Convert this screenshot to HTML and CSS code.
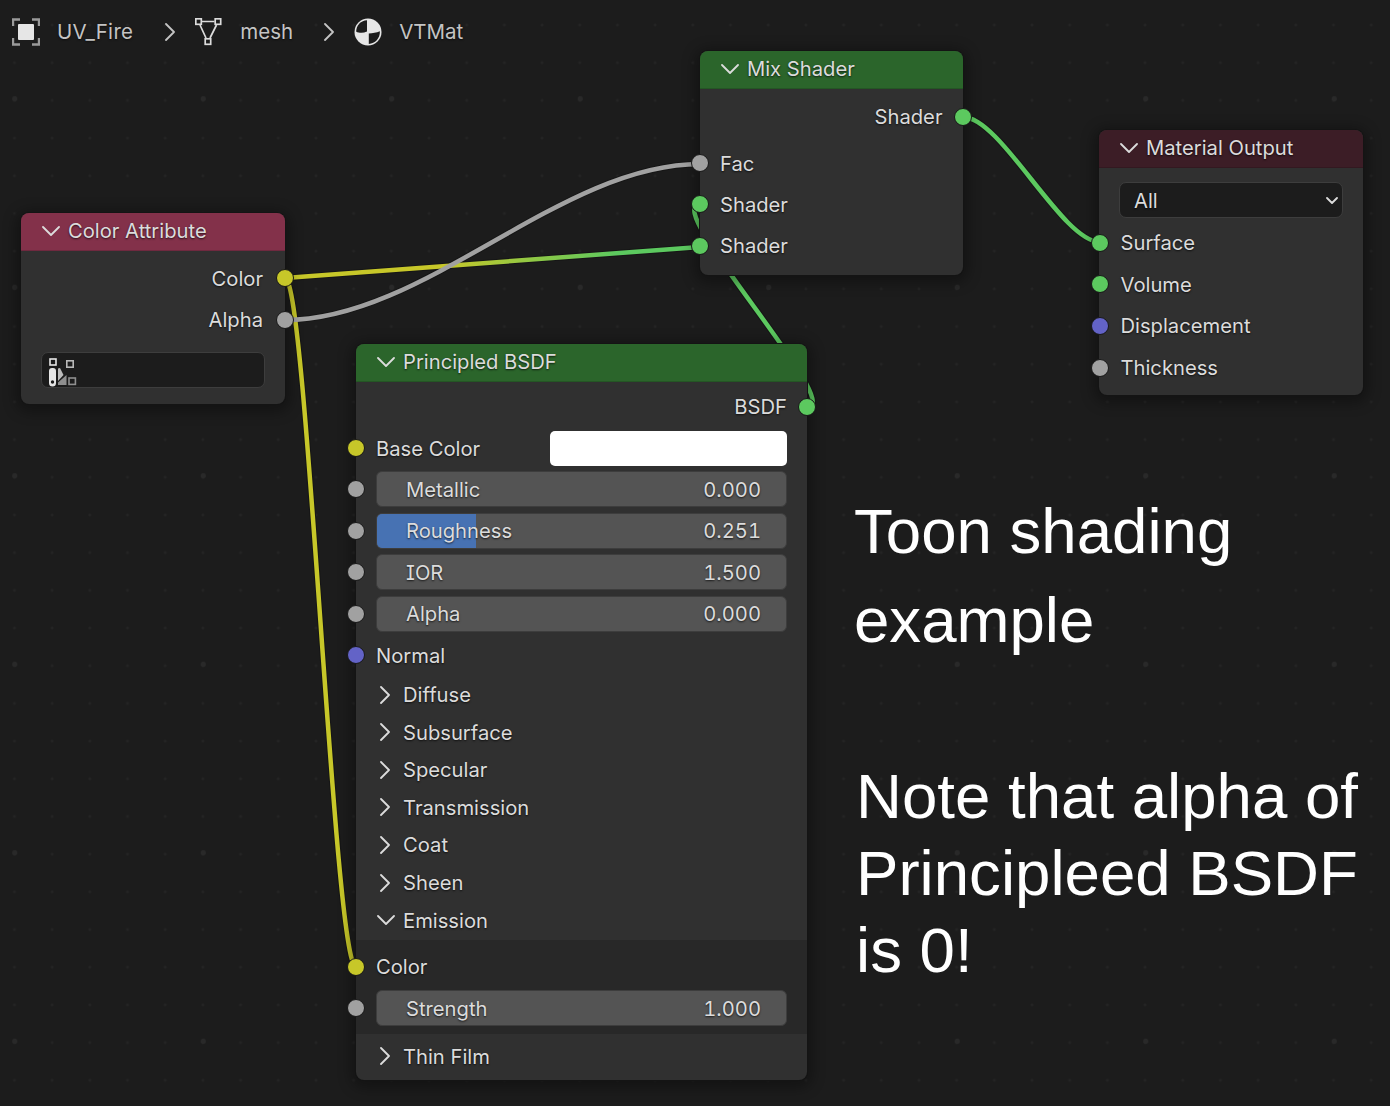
FILE: index.html
```html
<!DOCTYPE html>
<html lang="en">
<head>
    <meta charset="UTF-8">
    <title>VTMat node editor</title>
    <link rel="stylesheet" href="styles.css">
</head>
<body>
    <svg width="0" height="0" class="defs">
        <defs>
            <symbol id="chev-down" viewBox="0 0 18 10"><polyline points="1,1 9,9 17,1"/></symbol>
            <symbol id="chev-right" viewBox="0 0 10 18"><polyline points="1,1 9,9 1,17"/></symbol>
            <symbol id="chev-small" viewBox="0 0 12 7"><polyline points="1,1 6,6 11,1"/></symbol>
        </defs>
    </svg>

    <div class="canvas">
        <nav class="crumbs">
            <svg class="crumb-icon" width="28" height="28" viewBox="0 0 28 28">
                <path class="cage" d="M1 8V1.5H8M20 1.5H27V8M27 20V26.5H20M8 26.5H1V20"/>
                <rect x="6" y="6" width="16" height="16" rx="1" fill="#e6e6e6"/>
            </svg>
            <span class="crumb-label crumb-uv">UV_Fire</span>
            <svg class="crumb-sep" width="10" height="18"><use href="#chev-right"/></svg>
            <svg class="crumb-icon crumb-mesh" width="28" height="28" viewBox="0 0 28 28">
                <path class="wire" d="M7 3.500H19.500M5 7L11 20M21.500 7L15 20"/>
                <rect class="wire" x="0.800" y="0.800" width="5.500" height="5.500"/>
                <rect class="wire" x="20.200" y="0.800" width="5.500" height="5.500"/>
                <rect class="wire" x="10.200" y="20.800" width="5.500" height="5.500"/>
            </svg>
            <span class="crumb-label crumb-meshname">mesh</span>
            <svg class="crumb-sep" width="10" height="18"><use href="#chev-right"/></svg>
            <svg class="crumb-icon crumb-mat" width="28" height="28" viewBox="0 0 28 28">
                <circle cx="14" cy="14" r="13.5" fill="#e6e6e6"/>
                <path d="M13 2.2V13.6C9 15.4 5 15.2 2.1 13.4C2.4 7 7 2.6 13 2.2Z" fill="#1c1c1c"/>
                <path d="M14.8 15.4C18.5 15.4 22.5 14.6 25.9 13.2C26.2 20.4 21 25.6 14.8 25.9Z" fill="#1c1c1c"/>
            </svg>
            <span class="crumb-label crumb-matname">VTMat</span>
        </nav>

        <svg class="links" width="1390" height="1106" viewBox="0 0 1390 1106">
            <defs>
                <linearGradient id="yellow-green" gradientUnits="userSpaceOnUse" x1="285" y1="0" x2="700" y2="0">
                    <stop offset="0.38" stop-color="#c7c729"/>
                    <stop offset="0.8" stop-color="#5cc95f"/>
                </linearGradient>
            </defs>
            <g class="link-under">
                <path d="M285 278C307 278 334 967 356 967"/>
                <path d="M285 278L700 247"/>
                <path d="M285 320C425 320 560 164 700 164"/>
                <path d="M807 407C847 407 660 205 700 205"/>
                <path d="M963 117C1001 117 1062 242 1100 242"/>
            </g>
            <path class="link link-yellow" d="M285 278C307 278 334 967 356 967"/>
            <path class="link" stroke="url(#yellow-green)" d="M285 278L700 247"/>
            <path class="link link-green" d="M807 407C847 407 660 205 700 205"/>
            <path class="link link-grey" d="M285 320C425 320 560 164 700 164"/>
            <path class="link link-green" d="M963 117C1001 117 1062 242 1100 242"/>
        </svg>

        <section class="node node-attr">
            <header class="node-head head-attr">
                <svg class="chev-down" width="18" height="10"><use href="#chev-down"/></svg>Color Attribute
            </header>
            <div class="node-body attr-body">
                <div class="row row-out">Color<i class="socket out color"></i></div>
                <div class="row row-out">Alpha<i class="socket out value"></i></div>
                <div class="field">
                    <svg width="30" height="30" viewBox="0 0 30 30">
                        <rect x="2" y="2" width="6" height="6" fill="#1a1a1a" stroke="#e6e6e6" stroke-width="1.6"/>
                        <path d="M1 14a3 3 0 0 1 3-3h1a3 3 0 0 1 3 3v12a3.500 3.500 0 0 1-7 0Z" fill="#e6e6e6"/>
                        <circle cx="4.500" cy="25" r="1.700" fill="#1a1a1a"/>
                        <path d="M10 11.500L12 11L15.500 18L10 24Z" fill="#bcbcbc"/>
                        <path d="M10 28V25.500L18.500 18V28Z" fill="#8f8f8f"/>
                        <rect x="18.800" y="3.800" width="6.400" height="6.400" fill="none" stroke="#b8b8b8" stroke-width="1.600"/>
                        <rect x="21" y="21" width="6.400" height="6.400" fill="none" stroke="#8f8f8f" stroke-width="1.600"/>
                    </svg>
                </div>
            </div>
        </section>

        <section class="node node-mix">
            <header class="node-head head-shader">
                <svg class="chev-down" width="18" height="10"><use href="#chev-down"/></svg>Mix Shader
            </header>
            <div class="node-body mix-body">
                <div class="row row-out row-spaced">Shader<i class="socket out shader"></i></div>
                <div class="row"><i class="socket in value"></i>Fac</div>
                <div class="row"><i class="socket in shader"></i>Shader</div>
                <div class="row"><i class="socket in shader"></i>Shader</div>
            </div>
        </section>

        <section class="node node-output">
            <header class="node-head head-output">
                <svg class="chev-down" width="18" height="10"><use href="#chev-down"/></svg>Material Output
            </header>
            <div class="node-body output-body">
                <div class="select">All<svg class="select-arrow" width="12" height="7"><use href="#chev-small"/></svg></div>
                <div class="row"><i class="socket in shader"></i>Surface</div>
                <div class="row"><i class="socket in shader"></i>Volume</div>
                <div class="row"><i class="socket in vector"></i>Displacement</div>
                <div class="row"><i class="socket in value"></i>Thickness</div>
            </div>
        </section>

        <section class="node node-bsdf">
            <header class="node-head head-shader">
                <svg class="chev-down" width="18" height="10"><use href="#chev-down"/></svg>Principled BSDF
            </header>
            <div class="node-body bsdf-body">
                <div class="row row-out">BSDF<i class="socket out shader"></i></div>
                <div class="row row-color"><i class="socket in color"></i>Base Color<span class="swatch"></span></div>
                <div class="row"><i class="socket in value"></i><div class="slider"><span>Metallic</span><span>0.000</span></div></div>
                <div class="row"><i class="socket in value"></i><div class="slider"><b class="fill" style="width: 24.3%"></b><span>Roughness</span><span>0.251</span></div></div>
                <div class="row"><i class="socket in value"></i><div class="slider"><span>IOR</span><span>1.500</span></div></div>
                <div class="row"><i class="socket in value"></i><div class="slider"><span>Alpha</span><span>0.000</span></div></div>
                <div class="row"><i class="socket in vector"></i>Normal</div>

                <div class="panel-head"><svg class="chev-right" width="10" height="18"><use href="#chev-right"/></svg>Diffuse</div>
                <div class="panel-head"><svg class="chev-right" width="10" height="18"><use href="#chev-right"/></svg>Subsurface</div>
                <div class="panel-head"><svg class="chev-right" width="10" height="18"><use href="#chev-right"/></svg>Specular</div>
                <div class="panel-head"><svg class="chev-right" width="10" height="18"><use href="#chev-right"/></svg>Transmission</div>
                <div class="panel-head"><svg class="chev-right" width="10" height="18"><use href="#chev-right"/></svg>Coat</div>
                <div class="panel-head"><svg class="chev-right" width="10" height="18"><use href="#chev-right"/></svg>Sheen</div>
                <div class="panel-head"><svg class="chev-down" width="18" height="10"><use href="#chev-down"/></svg>Emission</div>
                <div class="panel-open">
                    <div class="row"><i class="socket in color"></i>Color</div>
                    <div class="row"><i class="socket in value"></i><div class="slider"><span>Strength</span><span>1.000</span></div></div>
                </div>
                <div class="panel-head panel-last"><svg class="chev-right" width="10" height="18"><use href="#chev-right"/></svg>Thin Film</div>
            </div>
        </section>

        <p class="note note-toon">Toon shading<br>example</p>
        <p class="note note-alpha">Note that alpha of<br>Principleed BSDF<br>is 0!</p>
    </div>
</body>
</html>
```

FILE: styles.css
```css
* {
    box-sizing: border-box;
}
html, body {
    margin: 0;
    height: 100%;
    overflow: hidden;
    background: #1c1c1c;
}
.defs {
    position: absolute;
}
symbol polyline {
    fill: none;
    stroke: currentColor;
    stroke-width: 1.8;
    stroke-linecap: round;
    stroke-linejoin: round;
}
.canvas {
    position: relative;
    width: 1390px;
    height: 1106px;
    overflow: hidden;
    font-family: Inter, "Liberation Sans", sans-serif;
    font-size: 20.2px;
    color: #dcdcdc;
    background-color: #1c1c1c;
    background-image:
        radial-gradient(circle, #292929 2.2px, transparent 3px),
        radial-gradient(circle, #242424 1.1px, transparent 1.8px);
    background-size: 188.5px 188.5px, 37.7px 37.7px;
    background-position: 297.500px 193px, -4.400px 6.200px;
}

/* breadcrumbs */
.crumbs {
    display: flex;
    align-items: center;
    height: 28px;
    margin: 18px 0 0 12px;
    color: #c4c4c4;
    font-size: 20.5px;
}
.crumb-label {
    margin-bottom: 2px;
    text-shadow: 0 1px 2px rgba(0, 0, 0, 0.6);
}
.crumb-uv {
    margin-left: 17px;
    margin-right: 32px;
    letter-spacing: 0.3px;
}
.crumb-mesh {
    margin-left: 20px;
}
.crumb-meshname {
    margin-left: 17px;
    margin-right: 31px;
}
.crumb-mat {
    margin-left: 20px;
}
.crumb-matname {
    margin-left: 17px;
}
.crumb-sep {
    color: #c4c4c4;
}
.cage {
    fill: none;
    stroke: #9a9a9a;
    stroke-width: 2.4;
}
.wire {
    fill: none;
    stroke: #dcdcdc;
    stroke-width: 1.7;
}

/* links between sockets */
.links {
    position: absolute;
    left: 0;
    top: 0;
}
.link-under path {
    fill: none;
    stroke: #161616;
    stroke-width: 6.500;
}
.link {
    fill: none;
    stroke-width: 4.500;
}
.link-yellow {
    stroke: #c7c729;
}
.link-green {
    stroke: #5cc95f;
}
.link-grey {
    stroke: #a1a1a1;
}

/* nodes */
.node {
    position: absolute;
    display: flex;
    flex-direction: column;
    background: #303030;
    border-radius: 8px;
    box-shadow: 0 0 0 1px #141414, 0 3px 14px 5px rgba(0, 0, 0, 0.32);
}
.node-attr {
    left: 21px;
    top: 213px;
    width: 264px;
    height: 191px;
}
.node-mix {
    left: 700px;
    top: 51px;
    width: 263px;
    height: 224px;
}
.node-output {
    left: 1099px;
    top: 130px;
    width: 264px;
    height: 265px;
}
.node-bsdf {
    left: 356px;
    top: 344px;
    width: 451px;
    height: 736px;
}
.node-head {
    display: flex;
    align-items: center;
    flex: none;
    height: 38px;
    padding: 0 0 2px 21px;
    border-radius: 8px 8px 0 0;
    border-bottom: 1px solid rgba(0, 0, 0, 0.15);
    text-shadow: 0 1px 2px rgba(0, 0, 0, 0.7);
}
.head-attr {
    background: #83314a;
}
.head-shader {
    background: #2b652b;
}
.head-output {
    background: #3c1d26;
}
.chev-down {
    flex: none;
    margin-right: 8px;
}
.node-body {
    display: flex;
    flex-direction: column;
}
.attr-body {
    padding-top: 6.500px;
}
.attr-body .row {
    padding-right: 22px;
}
.mix-body {
    padding-top: 7px;
}
.output-body {
    padding-top: 14px;
}
.output-body .row {
    height: 41.600px;
    padding-left: 21.500px;
}
.output-body .socket.in {
    left: -8px;
}
.bsdf-body {
    padding-top: 4px;
}
.row {
    position: relative;
    display: flex;
    align-items: center;
    flex: none;
    height: 41.400px;
    padding: 0 20.500px 0 20px;
    text-shadow: 0 1px 2px rgba(0, 0, 0, 0.7);
}
.row-out {
    justify-content: flex-end;
}
.row-spaced {
    margin-bottom: 5px;
}
.row-color {
    justify-content: space-between;
}
.bsdf-body .row {
    padding-right: 20px;
}

/* sockets sit on the node edge */
.socket {
    position: absolute;
    top: 50%;
    width: 18px;
    height: 18px;
    margin-top: -9px;
    border-radius: 50%;
    border: 1.500px solid #181818;
}
.socket.in {
    left: -9px;
}
.socket.out {
    right: -9px;
}
.shader {
    background: #5cc95f;
}
.color {
    background: #c7c729;
}
.value {
    background: #a1a1a1;
}
.vector {
    background: #6363c7;
}

/* widgets */
.swatch {
    width: 237px;
    height: 35px;
    background: #fff;
    border-radius: 5px;
}
.slider {
    position: relative;
    display: flex;
    justify-content: space-between;
    align-items: center;
    width: 100%;
    height: 36px;
    padding: 0 25px 0 29px;
    background: #545454;
    border: 1px solid #3d3d3d;
    border-radius: 6px;
    overflow: hidden;
    font-feature-settings: "tnum", "cv08";
}
.slider span {
    position: relative;
}
.fill {
    position: absolute;
    left: 0;
    top: 0;
    bottom: 0;
    background: #4772b3;
}
.field, .select {
    display: flex;
    align-items: center;
    background: #1c1c1c;
    border: 1.500px solid #3d3d3d;
    border-radius: 7px;
    height: 36px;
}
.field {
    margin: 12px 20px 0 20px;
    padding: 3px 0 0 6px;
}
.select {
    justify-content: space-between;
    margin: 0 20px 4px 20px;
    padding: 0 4px 0 14px;
    text-shadow: 0 1px 2px rgba(0, 0, 0, 0.7);
}
.select-arrow {
    color: #dcdcdc;
}

/* collapsible panels in the BSDF node */
.panel-head {
    display: flex;
    align-items: center;
    flex: none;
    height: 37.600px;
    padding-left: 21px;
    text-shadow: 0 1px 2px rgba(0, 0, 0, 0.7);
}
.chev-right {
    flex: none;
    margin: 0 13px 0 3px;
}
.panel-open {
    margin-top: 1.600px;
    padding: 5.500px 0;
    background: #282828;
}
.panel-last {
    margin-top: 3px;
}

/* notes typed over the screenshot */
.note {
    position: absolute;
    margin: 0;
    font-family: "Liberation Sans", Arial, sans-serif;
    font-size: 63.600px;
    color: #fff;
    white-space: nowrap;
}
.note-toon {
    left: 854px;
    top: 486px;
    line-height: 89px;
}
.note-alpha {
    left: 856px;
    top: 757px;
    line-height: 77px;
}
```
